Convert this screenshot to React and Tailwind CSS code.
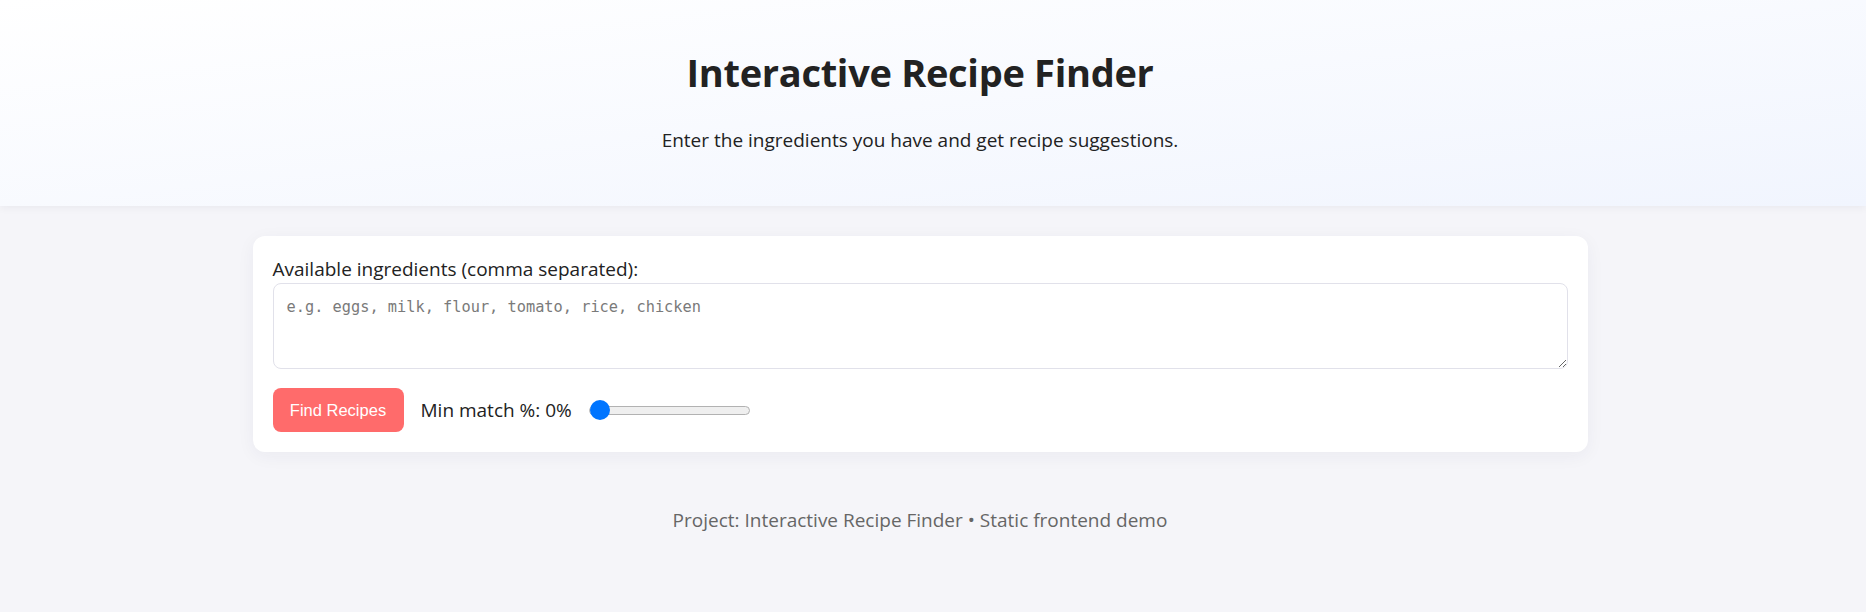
import { useState } from 'react';

export default function App() {
  const [ingredients, setIngredients] = useState('');
  const [minMatch, setMinMatch] = useState(0);

  return (
    <div className="min-h-[612px] bg-[#f5f5f9] text-[#222] font-['Open_Sans','Noto_Sans',sans-serif]">
      <header className="h-[206px] bg-gradient-to-br from-white to-[#f1f5fe] pr-[26px] pt-[48px] text-center shadow-[0_2px_8px_rgba(20,20,60,0.05)]">
        <h1 className="text-[38px] font-bold leading-[48px] tracking-[-0.3px]">Interactive Recipe Finder</h1>
        <p className="mt-[30px] text-[19px] leading-[28px]">
          Enter the ingredients you have and get recipe suggestions.
        </p>
      </header>

      <main className="pr-[26px] pt-[30px]">
        <div className="mx-auto w-[1335px] rounded-xl bg-white p-5 shadow-[0_4px_18px_rgba(30,30,80,0.05)]">
          <label htmlFor="ingredients" className="block text-[19px] leading-[27px]">
            Available ingredients (comma separated):
          </label>
          <textarea
            id="ingredients"
            value={ingredients}
            onChange={(event) => setIngredients(event.target.value)}
            placeholder="e.g. eggs, milk, flour, tomato, rice, chicken"
            className="block h-[86px] w-full rounded-lg border border-[#e1e1ea] px-[13px] py-[11px] font-['DejaVu_Sans_Mono',monospace] text-[15.3px] leading-[24px] outline-none placeholder:text-[#7a7a7a]"
          />
          <div className="mt-[19px] flex items-center gap-[17px]">
            <button className="h-[44px] w-[131px] rounded-lg bg-[#ff6b6b] font-['Liberation_Sans',Arial,sans-serif] text-[16.5px] text-white">
              Find Recipes
            </button>
            <span className="text-[19px] leading-[26px]">{`Min match %: ${minMatch}%`}</span>
            <input
              type="range"
              min="0"
              max="100"
              value={minMatch}
              onChange={(event) => setMinMatch(event.target.value)}
              className="h-[9px] w-[161px] cursor-pointer appearance-none rounded-full border border-[#b2b2b2] bg-[#efefef] [&::-webkit-slider-thumb]:h-5 [&::-webkit-slider-thumb]:w-5 [&::-webkit-slider-thumb]:appearance-none [&::-webkit-slider-thumb]:rounded-full [&::-webkit-slider-thumb]:bg-[#0075ff]"
            />
          </div>
        </div>

        <p className="mt-[56px] text-center text-[19px] leading-[24px] text-[#666]">
          Project: Interactive Recipe Finder • Static frontend demo
        </p>
      </main>
    </div>
  );
}
